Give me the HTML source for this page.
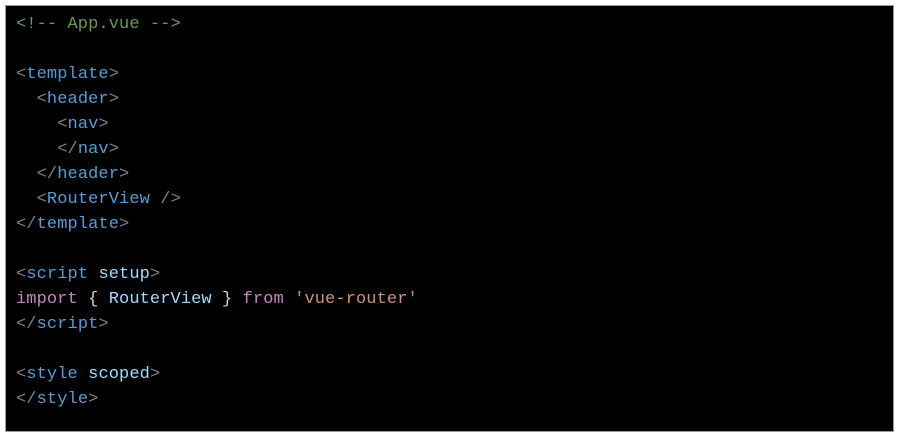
<!DOCTYPE html>
<html><head><meta charset="utf-8"><style>
html,body{margin:0;padding:0;background:#fff;width:900px;height:439px;overflow:hidden}
.box{position:absolute;left:5px;top:5px;width:889px;height:427px;background:#000;border:1px solid #999;box-sizing:border-box}
pre{position:absolute;left:10px;top:6px;margin:0;font-family:"Liberation Mono",monospace;font-size:17px;line-height:25px;color:#d4d4d4;letter-spacing:0.1px}
.c{color:#6a9955}.b{color:#808080}.t{color:#569cd6}.a{color:#9cdcfe}.k{color:#c586c0}.s{color:#ce9178}
</style></head><body><div class="box"><pre><span class="c">&lt;!-- App.vue --&gt;</span>

<span class="b">&lt;</span><span class="t">template</span><span class="b">&gt;</span>
  <span class="b">&lt;</span><span class="t">header</span><span class="b">&gt;</span>
    <span class="b">&lt;</span><span class="t">nav</span><span class="b">&gt;</span>
    <span class="b">&lt;/</span><span class="t">nav</span><span class="b">&gt;</span>
  <span class="b">&lt;/</span><span class="t">header</span><span class="b">&gt;</span>
  <span class="b">&lt;</span><span class="t">RouterView</span> <span class="b">/&gt;</span>
<span class="b">&lt;/</span><span class="t">template</span><span class="b">&gt;</span>

<span class="b">&lt;</span><span class="t">script</span> <span class="a">setup</span><span class="b">&gt;</span>
<span class="k">import</span> { <span class="a">RouterView</span> } <span class="k">from</span> <span class="s">'vue-router'</span>
<span class="b">&lt;/</span><span class="t">script</span><span class="b">&gt;</span>

<span class="b">&lt;</span><span class="t">style</span> <span class="a">scoped</span><span class="b">&gt;</span>
<span class="b">&lt;/</span><span class="t">style</span><span class="b">&gt;</span></pre></div></body></html>
